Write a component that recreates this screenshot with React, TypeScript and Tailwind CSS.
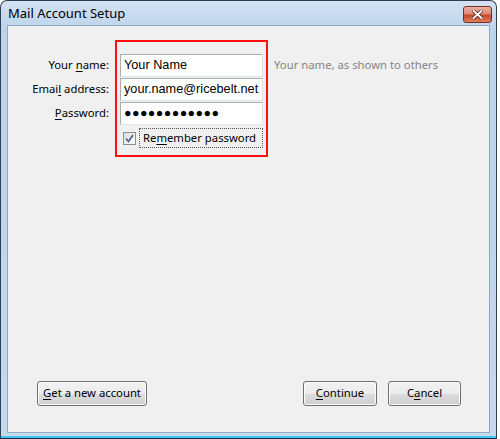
import React from "react";

const ui = { fontFamily: '"Noto Sans", "Open Sans", sans-serif', fontSize: "11.3px" };
const arial = { fontFamily: '"Liberation Sans", Arial, sans-serif', fontSize: "12.7px" };

function U({ children }: { children: React.ReactNode }) {
  return <span className="underline underline-offset-[2px]">{children}</span>;
}

function Btn({ children, w }: { children: React.ReactNode; w: string }) {
  return (
    <div
      className={`${w} h-[25px] rounded-[3px] border border-[#707070] bg-[linear-gradient(#f2f2f2_0%,#ebebeb_50%,#dddddd_51%,#cfcfcf_100%)] flex items-center justify-center text-black shadow-[inset_0_0_0_1px_#fcfcfc]`}
      style={ui}
    >
      <span className="whitespace-nowrap">{children}</span>
    </div>
  );
}

function Field({ children }: { children: React.ReactNode }) {
  return (
    <div
      className="h-[23px] border border-[#abadb3] border-b-[#e3e9ef] border-r-[#dbdfe6] bg-white flex items-center pl-[3px] text-black"
      style={arial}
    >
      <span className="whitespace-nowrap">{children}</span>
    </div>
  );
}

export default function App() {
  return (
    <div className="w-[500px] h-[439px] bg-white">
      <div className="w-[497px] h-[439px] rounded-t-[7px] border border-[#2f3f52] border-b-[#1c2a38] bg-[linear-gradient(#d3e2f2,#bcd3ec_30px,#c4d8ee)] flex flex-col px-[6px] pb-[5px] shadow-[inset_0_-2px_0_#44c4ef]">
        <div className="h-[24px] flex items-center justify-between shrink-0">
          <span className="text-[13px] text-black pl-[1px] pt-[1px]" style={{ fontFamily: '"Noto Sans", sans-serif' }}>
            Mail Account Setup
          </span>
          <div className="w-[29px] h-[17px] mr-[-2px] mt-[2px] rounded-[3px] border border-[#7a2f25] bg-[linear-gradient(#eab0a2,#db8a76_45%,#c7472f_55%,#d9805f)] flex items-center justify-center">
            <svg width="11" height="9" viewBox="0 0 11 9">
              <path d="M1.5 1 L9.5 8 M9.5 1 L1.5 8" stroke="#5a2016" strokeWidth="3.4" strokeLinecap="square" />
              <path d="M1.5 1 L9.5 8 M9.5 1 L1.5 8" stroke="#ffffff" strokeWidth="1.9" strokeLinecap="square" />
            </svg>
          </div>
        </div>
        <div className="flex-1 border border-[#8fa9c4] bg-[#f0f0f0] flex flex-col">
          <div className="flex pt-[14px]" style={ui}>
            <div className="w-[104px] pr-[3px] pt-[14px] flex flex-col gap-[1px] items-end text-black">
              <div className="h-[23px] flex items-center">
                <span className="whitespace-nowrap">Your <U>n</U>ame:</span>
              </div>
              <div className="h-[23px] flex items-center">
                <span className="whitespace-nowrap">Emai<U>l</U> address:</span>
              </div>
              <div className="h-[23px] flex items-center">
                <span className="whitespace-nowrap"><U>P</U>assword:</span>
              </div>
            </div>
            <div className="ml-[3px] w-[153px] h-[117px] border-2 border-[#ff1010] pt-[12px] px-[3px] flex flex-col gap-[1px]">
              <Field>Your Name</Field>
              <Field>your.name@ricebelt.net</Field>
              <Field>
                <span className="tracking-[0.4px] text-[12.5px]">●●●●●●●●●●●●</span>
              </Field>
              <div className="h-[22px] flex items-center pl-[3px] pt-[2px]">
                <div className="w-[13px] h-[13px] border border-[#8e8f8f] bg-[linear-gradient(135deg,#dcdcdc,#ffffff)] flex items-center justify-center shrink-0">
                  <svg width="9" height="9" viewBox="0 0 9 9">
                    <path d="M1 4.5 L3.5 7.5 L8 1" stroke="#3c5a96" strokeWidth="1.6" fill="none" />
                  </svg>
                </div>
                <div className="ml-[3px] flex-1 h-[20px] border border-dotted border-[#555] flex items-center pl-[3px] text-black">
                  <span className="whitespace-nowrap">Re<U>m</U>ember password</span>
                </div>
              </div>
            </div>
            <div className="pl-[6px] pt-[14px] text-[#858585]">
              <div className="h-[23px] flex items-center">
                <span className="whitespace-nowrap">Your name, as shown to others</span>
              </div>
            </div>
          </div>
          <div className="flex-1" />
          <div className="flex items-center pl-[29px] pr-[28px] pb-[26px]">
            <Btn w="w-[110px]">
              <U>G</U>et a new account
            </Btn>
            <div className="flex-1" />
            <Btn w="w-[74px]">
              <U>C</U>ontinue
            </Btn>
            <div className="w-[11px]" />
            <Btn w="w-[73px]">
              C<U>a</U>ncel
            </Btn>
          </div>
        </div>
      </div>
    </div>
  );
}
